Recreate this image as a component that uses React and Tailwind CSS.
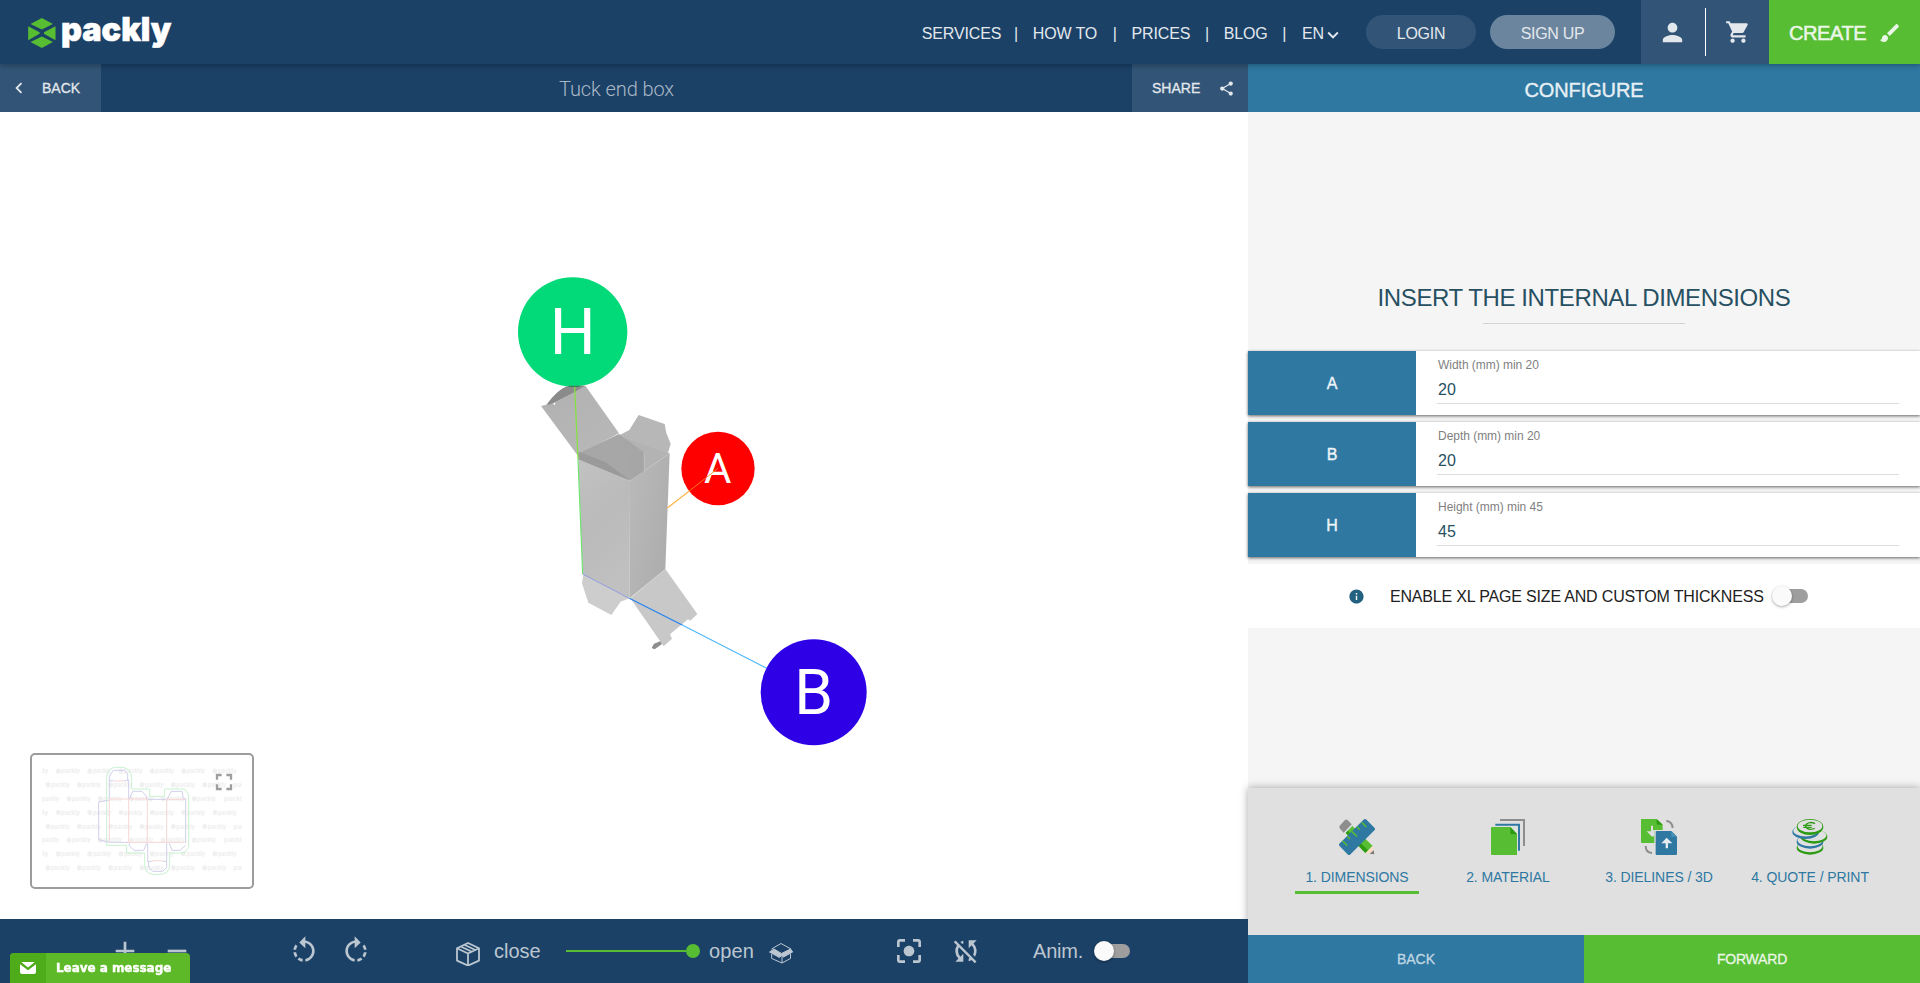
import React from "react";
import {
  MdAdd,
  MdRemove,
  MdRotateLeft,
  MdRotateRight,
  MdCenterFocusStrong,
  MdSyncDisabled,
  MdPerson,
  MdShoppingCart,
  MdBrush,
  MdShare,
  MdInfo,
  MdExpandMore,
  MdChevronLeft,
  MdFullscreen,
} from "react-icons/md";

const NAV = [
  { label: "SERVICES", className: "mr-[-2px]" },
  { label: "HOW TO", className: "mr-[1px]" },
  { label: "PRICES", className: "" },
  { label: "BLOG", className: "" },
];

function Logo() {
  return (
    <svg className="ml-[28px] h-[60px] w-[150px] overflow-visible" viewBox="28 2 150 60">
      <g fill="#57bd32">
        <path d="M41.8 18 53 24 41.8 29.6 30.5 24Z" />
        <path d="M41.8 48 53 42 41.8 36.6 30.5 42Z" />
        <path d="M28.2 26.3 39.6 32.2V33.8L28.2 40.2Z" />
        <path d="M55.5 26.3 44 32.2V33.8L55.5 40.2Z" />
      </g>
      <text
        x="61"
        y="40.7"
        fontSize="33"
        fontWeight="900"
        fontFamily="Inter, sans-serif"
        fill="#fff"
        stroke="#fff"
        strokeWidth="0.6"
        textLength="110.5"
        lengthAdjust="spacingAndGlyphs"
      >
        packly
      </text>
    </svg>
  );
}

function Header() {
  return (
    <header className="relative z-20 flex h-16 shrink-0 items-center bg-[#1b4167] text-[#e3e8ed] shadow-[0_2px_5px_rgba(0,0,0,0.26)]">
      <Logo />
      <nav className="ml-auto flex items-center gap-[14.7px] pt-[3px] text-base tracking-[-0.13px]">
        {NAV.map((item) => (
          <React.Fragment key={item.label}>
            <a className={"whitespace-nowrap " + item.className}>{item.label}</a>
            <span className="w-1 text-center">|</span>
          </React.Fragment>
        ))}
        <a className="ml-[1px] flex items-center">
          EN
          <MdExpandMore size={22} className="ml-[-2px] mt-[2px]" />
        </a>
      </nav>
      <button className="ml-[22px] h-[34px] w-[110px] rounded-full bg-[#325577] pt-[3px] text-base tracking-[-0.3px]">
        LOGIN
      </button>
      <button className="ml-[14px] h-[34px] w-[125px] rounded-full bg-[#6b859e] pt-[3px] text-base tracking-[-0.3px]">
        SIGN UP
      </button>
      <div className="ml-[26px] flex h-16 w-32 items-center bg-[#325577]">
        <div className="flex w-16 justify-center pr-px">
          <MdPerson size={29} />
        </div>
        <div className="h-12 w-px bg-white" />
        <div className="flex flex-1 justify-center">
          <MdShoppingCart size={26} />
        </div>
      </div>
      <button className="flex h-16 w-[151px] items-center bg-[#57bd32] pl-5 pt-px text-xl tracking-[-0.4px] text-[#eaf6e6] [-webkit-text-stroke:0.5px_#eaf6e6]">
        CREATE
        <MdBrush size={24} className="ml-[12px]" strokeWidth="0" />
      </button>
    </header>
  );
}

function Scene() {
  return (
    <svg
      className="ml-[500px] mt-[148px] h-[500px] w-[400px]"
      viewBox="0 0 1200 1500"
      fontFamily="Roboto, sans-serif"
      textAnchor="middle"
    >
      <defs>
        <linearGradient id="front" x1="0" y1="0" x2="0.3" y2="1">
          <stop offset="0" stopColor="#c2c2c2" />
          <stop offset="0.5" stopColor="#bababa" />
          <stop offset="1" stopColor="#c0c0c0" />
        </linearGradient>
        <linearGradient id="side" x1="0" y1="0" x2="1" y2="0.6">
          <stop offset="0" stopColor="#bababa" />
          <stop offset="1" stopColor="#adadad" />
        </linearGradient>
        <linearGradient id="lid" x1="0" y1="0" x2="0.6" y2="1">
          <stop offset="0" stopColor="#b0b0b0" />
          <stop offset="1" stopColor="#b8b8b8" />
        </linearGradient>
      </defs>
      <circle cx="218" cy="216" r="164" fill="#02d978" />
      <text x="218" y="282" fontSize="193" fill="#fff">H</text>

      <path d="M137 437C160 405 185 382 212 377H256L225 396Z" fill="#8b8b8b" />
      <path d="M123 438 158 430 165 436 166 427 224 396 256 377 357 520 240 582 237 592Z" fill="url(#lid)" />
      <path d="M143 436C160 405 185 382 205 378H254L224 396 163 428Z" fill="#8b8b8b" />
      <path d="M358 526 388 510 416 465 494 492 499 519 512 551 504 579Z" fill="#b7b7b7" />
      <path d="M358 525 509 580 433 632Z" fill="#b3b3b3" />
      <path d="M240 578 357 522 433 578V634L390 662 235 600Z" fill="#a6a6a6" />
      <path d="M255 580 357 524 380 585 395 655Z" fill="#a9a9a9" opacity=".6" />
      <path d="M235 575 317 607 390 662 235 600Z" fill="#9a9a9a" />
      <path d="M433 578V632" stroke="#c4c4c4" strokeWidth="2.5" />
      <path d="M235 598 390 662 389 1015 248 942Z" fill="url(#front)" />
      <path d="M390 662 509 580 496 927 389 1015Z" fill="url(#side)" />
      <path d="M250 943 388 1015 362 1025 334 1065 265 1028 246 970Z" fill="#cdcdcd" />
      <path d="M455 1164 462 1151 482 1143 486 1152 464 1168Z" fill="#8e8e8e" />
      <path d="M391 1015 496 927 592 1062 571 1082 564 1078 510 1123 516 1136 491 1159Z" fill="#c8c8c8" />

      <path d="M224 380 234 598" stroke="#83e53b" strokeWidth="3.5" />
      <path d="M234 598 248 942" stroke="#6be46d" strokeWidth="3.5" />
      <path d="M248 942 388 1015" stroke="#8e9bdd" strokeWidth="3" />
      <path d="M388 1015 548 1096" stroke="#2082f0" strokeWidth="3.5" />
      <path d="M548 1096 800 1225" stroke="#4db8fa" strokeWidth="3.5" />
      <path d="M206 379H238" stroke="#25834f" strokeWidth="3" />

      <circle cx="654" cy="625.500" r="110" fill="#fe0000" />
      <text x="653" y="669" fontSize="126" fill="#fff">A</text>
      <path d="M502 744 569 692" stroke="#fdb546" strokeWidth="3.5" />
      <path d="M569 692 654 625" stroke="#ff8a1c" strokeWidth="2.5" />
      <circle cx="941" cy="1297" r="159" fill="#2e00e6" />
      <text x="941" y="1361" fontSize="187" fill="#fff">B</text>
    </svg>
  );
}

const MARK_ROWS = [94, 135, 177, 218, 260, 301, 342, 384];
const MARK_STARTS = [168, 137, 200];
const MARK_COUNTS = [6, 6, 5];
const MARK_COLS = [0, 1, 2, 3, 4, 5];

function Mark({ x, y }) {
  return (
    <g>
      <path d={"M" + x + " " + (y - 5) + "l7 -4 7 4v9l-7 4-7-4z"} />
      <text x={x + 16} y={y + 6} textLength="56" lengthAdjust="spacingAndGlyphs">
        packly
      </text>
    </g>
  );
}

function DielinePreview() {
  return (
    <div className="absolute bottom-[30px] left-[30px] h-[136px] w-[224px] rounded-[5px] border-2 border-[#9c9c9c] bg-white">
      <svg className="h-[132px] w-[220px]" viewBox="96 45 660 396" fill="none">
        <g fill="#f0f0f0" fontFamily="Inter, sans-serif" fontWeight="800" fontSize="20">
          {MARK_ROWS.map((y, r) => (
            <g key={y}>
              {MARK_COLS.slice(0, MARK_COUNTS[r % 3]).map((c) => (
                <Mark key={c} x={MARK_STARTS[r % 3] + c * 94} y={y} />
              ))}
              {r % 3 === 0 && <text x="127" y={y + 6} textLength="19" lengthAdjust="spacingAndGlyphs">ly</text>}
              {r % 3 === 1 && <text x="700" y={y + 6} textLength="25" lengthAdjust="spacingAndGlyphs">pa</text>}
              {r % 3 === 2 && <text x="127" y={y + 6} textLength="50" lengthAdjust="spacingAndGlyphs">packly</text>}
              {r % 3 === 2 && <text x="672" y={y + 6} textLength="53" lengthAdjust="spacingAndGlyphs">packl</text>}
            </g>
          ))}
        </g>
        <path
          d="M320 316V110Q322 82 350 82H366Q393 84 395 112V147H449V169H494V147H554L566 165V322L552 339H509V376Q507 403 480 403H462Q436 403 434 376V339H380V316Z"
          stroke="#c9f2d0"
          strokeWidth="3"
        />
        <g stroke="#d0d0ea" strokeWidth="3">
          <path d="M328 177V108L340 91H374L383 102V120H386V177" />
          <path d="M328 180 296 186V299L328 307H386" />
          <path d="M388 177 398 154H426L440 170V177" />
          <path d="M442 178H500M502 177 514 154H546L550 176H557V308" />
          <path d="M388 308V318L403 331H431L440 310M508 310 516 331H540L557 316" />
          <path d="M443 310V364H446V382L458 394H488L500 382V310M443 364H458M488 364H500M328 122H340M372 122H386" />
        </g>
        <g stroke="#f8d6d6" strokeWidth="3">
          <path d="M328 177H442M500 178H557M328 180V305M386 177V307M442 178V308M500 178V308M386 307H557M342 123H372M458 362H488" />
        </g>
      </svg>
      <MdFullscreen size={28} className="absolute right-[14px] top-[13px] text-[#9e9e9e]" />
    </div>
  );
}

function Toggle({ className }) {
  return (
    <div className={"flex h-5 w-9 items-center " + className}>
      <div className="flex h-3.5 w-[35px] items-center rounded-full bg-[#9e9e9e]">
        <div className="-ml-px h-5 w-5 shrink-0 rounded-full bg-[#fafafa] shadow-[0_1px_3px_rgba(0,0,0,0.35)]" />
      </div>
    </div>
  );
}

function ClosedBoxIcon() {
  return (
    <svg className="h-6 w-6" viewBox="0 0 24 24" fill="none" stroke="currentColor" strokeWidth="1.8" strokeLinejoin="round">
      <path d="M12 1 23 6.300V18.600L12 23.600 1 18.600V6.300Z" />
      <path d="M1 6.300 12 11.500 23 6.300M12 11.500V23.600M4.800 4.500 15.800 9.700M8.400 2.800 19.300 8" />
    </svg>
  );
}

function OpenBoxIcon() {
  return (
    <svg className="h-[22px] w-6" viewBox="0 0 24 22" fill="none" stroke="currentColor" strokeWidth="1">
      <path d="M2.500 7 12 1.500 22 7M2.700 12V16.500L13 21 21.500 16.500V12M13 14V21" />
      <path d="M.5 10 5 7 12.500 11.500 21.500 7 23.700 10 14.500 15 12.500 13.500 10.500 15.500Z" fill="currentColor" />
    </svg>
  );
}

function Toolbar() {
  return (
    <div className="relative z-10 flex h-16 shrink-0 items-center bg-[#1b4167] text-xl text-[#bbc6d1]">
      <MdAdd size={32} className="ml-[109px]" />
      <MdRemove size={32} className="ml-[20px]" />
      <MdRotateLeft size={32} className="ml-[95px]" />
      <MdRotateRight size={32} className="ml-[20px]" />
      <div className="ml-[84px] mt-[5px]">
        <ClosedBoxIcon />
      </div>
      <span className="ml-[14px] w-[48px]">close</span>
      <div className="ml-[24px] flex w-[134px] items-center">
        <div className="h-0.5 flex-1 bg-[#57bd32]" />
        <div className="h-3.5 w-3.5 rounded-full bg-[#57bd32]" />
      </div>
      <span className="ml-[9px] w-[46px] tracking-[0.1px]">open</span>
      <div className="ml-[14px] mt-[4px]">
        <OpenBoxIcon />
      </div>
      <MdCenterFocusStrong size={32} className="ml-[100px]" />
      <MdSyncDisabled size={32} className="ml-[25px]" />
      <span className="ml-[51px] w-[52px] tracking-[-0.2px]">Anim.</span>
      <Toggle className="ml-[10px]" />
    </div>
  );
}

function Workspace() {
  return (
    <main className="flex w-[1248px] flex-col bg-white">
      <div className="relative z-10 flex h-12 shrink-0 items-center justify-between bg-[#1b4167] text-sm text-[#e3e8ed]">
        <button className="flex h-12 w-[101px] items-center bg-[#325577] pl-[8px] [-webkit-text-stroke:0.3px_#e3e8ed]">
          <MdChevronLeft size={22} strokeWidth="0" />
          <span className="ml-[12px]">BACK</span>
        </button>
        <h1 className="pt-[2px] text-[20px] font-light tracking-[-0.1px] text-[#aab8c6] [font-family:Roboto,sans-serif]">Tuck end box</h1>
        <button className="flex h-12 w-[116px] items-center bg-[#325577] pl-5 [-webkit-text-stroke:0.3px_#e3e8ed]">
          SHARE
          <MdShare size={17} className="ml-[18px]" strokeWidth="0" />
        </button>
      </div>
      <div className="relative flex-1">
        <Scene />
        <DielinePreview />
      </div>
      <Toolbar />
    </main>
  );
}

const FIELDS = [
  { key: "A", label: "Width (mm) min 20", value: "20" },
  { key: "B", label: "Depth (mm) min 20", value: "20" },
  { key: "H", label: "Height (mm) min 45", value: "45" },
];

function Field({ field }) {
  return (
    <div className="flex h-16 bg-white shadow-[0_1px_3px_rgba(0,0,0,0.6)]">
      <div className="flex w-[168px] items-center justify-center bg-[#2e78a2] pt-[2px] text-base text-[#edf3f7] [-webkit-text-stroke:0.4px_#edf3f7]">
        {field.key}
      </div>
      <div className="ml-[21px] mr-[21px] flex-1 pt-[6px]">
        <div className="h-[47px] border-b border-[#dedede] pl-px">
          <div className="text-xs leading-[16px] tracking-[-0.03px] text-[#7f7f7f]">{field.label}</div>
          <div className="pt-[5px] text-base leading-6 text-[#275062]">{field.value}</div>
        </div>
      </div>
    </div>
  );
}

function DimensionsIcon() {
  return (
    <svg className="h-9 w-9" viewBox="42 27 108 108">
      <path d="M44 47 60 30Q64 27 68 31L80 43 56 68 45 56Q42 51 44 47Z" fill="#8d8d8d" />
      <path d="M62 69 82 48 143 108 122 130Z" fill="#57bd32" />
      <path d="M62 69 68 62 131 122 122 130Z" fill="#2c9a12" />
      <path d="M143 107 148 133 121 129Z" fill="#f6dcc3" />
      <path d="M146 121 148 133 134 131Z" fill="#7b7b7b" />
      <path d="M43 101 117 28Q120 26 123 28L149 54Q151 57 149 60L75 134Q72 136 69 134L43 107Q41 104 43 101Z" fill="#2e78a2" />
      <path d="M110 37 124 51M96 50 104 59M81 65 96 79M67 79 75 87M53 93 67 107" stroke="#57bd32" strokeWidth="4.500" />
    </svg>
  );
}

function MaterialIcon() {
  return (
    <svg className="h-9 w-9" viewBox="495 27 108 108" fill="none">
      <path d="M525 30H597V108" stroke="#8d8d8d" strokeWidth="6" />
      <path d="M511 44H582V122" stroke="#2e78a2" strokeWidth="6" />
      <path d="M501 51H556L576 71V135H501Q498 135 498 132V54Q498 51 501 51Z" fill="#57bd32" />
      <path d="M556 51 576 73H559Q556 73 556 70Z" fill="#2c9a12" />
    </svg>
  );
}

function DielinesIcon() {
  return (
    <svg className="h-9 w-9" viewBox="951 27 108 108" fill="none">
      <path d="M1027 32Q1045 35 1046 54M984 129Q965 128 965 108" stroke="#8d8d8d" strokeWidth="6" />
      <path d="M951 27H998L1016 44V60H991V99H954Q951 99 951 96Z" fill="#57bd32" />
      <path d="M998 27 1016 44H1001Q998 44 998 41Z" fill="#2c9a12" />
      <path d="M981 47H987V60H991V78L984 80 968 64H981Z" fill="#e0e0e0" />
      <path d="M998 63H1042L1059 80V132Q1059 135 1056 135H998Q995 135 995 132V66Q995 63 998 63Z" fill="#2e78a2" />
      <path d="M1042 63 1059 80H1042Z" fill="#4793ba" />
      <path d="M1028 83 1045 100H1032V115H1025V100H1012Z" fill="#e6edf1" />
    </svg>
  );
}

function Coin({ cx, cy, color }) {
  return (
    <g>
      <ellipse cx={cx} cy={cy + 4} rx="40" ry="21" fill={color} />
      <ellipse cx={cx} cy={cy} rx="37" ry="17.500" fill="#e0e0e0" />
    </g>
  );
}

function QuoteIcon() {
  return (
    <svg className="h-9 w-9" viewBox="1403 27 108 108">
      <Coin cx={1457} cy={109} color="#2c9a12" />
      <Coin cx={1457} cy={91} color="#2e78a2" />
      <Coin cx={1469} cy={76} color="#2c9a12" />
      <Coin cx={1444} cy={62} color="#2e78a2" />
      <ellipse cx="1457" cy="51" rx="40" ry="24" fill="#2c9a12" />
      <ellipse cx="1457" cy="48" rx="37" ry="19" fill="#e0e0e0" />
      <path d="M1472 41Q1462 35 1452 39 1443 43 1444 49 1447 58 1458 58 1467 58 1471 55M1436 46H1462M1437 52H1462" fill="none" stroke="#2c9a12" strokeWidth="4" />
    </svg>
  );
}

const STEPS = [
  { label: "1. DIMENSIONS", Icon: DimensionsIcon, active: true },
  { label: "2. MATERIAL", Icon: MaterialIcon },
  { label: "3. DIELINES / 3D", Icon: DielinesIcon },
  { label: "4. QUOTE / PRINT", Icon: QuoteIcon },
];

function ConfigurePanel() {
  return (
    <aside className="flex w-[672px] flex-col bg-[#f5f5f5]">
      <div className="flex h-12 shrink-0 items-center justify-center bg-[#2e78a2] pt-[3px] text-xl tracking-[-0.1px] text-[#e6eff4] [-webkit-text-stroke:0.4px_#e6eff4]">
        CONFIGURE
      </div>
      <div className="flex flex-1 flex-col">
        <h2 className="mt-[170px] text-center text-2xl leading-8 tracking-[-0.39px] text-[#275062]">
          INSERT THE INTERNAL DIMENSIONS
        </h2>
        <div className="mx-auto mt-[9px] h-px w-[202px] bg-[#d3d3d3]" />
        <div className="mt-[27px] flex flex-col gap-[7px]">
          {FIELDS.map((f) => (
            <Field key={f.key} field={f} />
          ))}
        </div>
        <div className="mt-[7px] flex h-16 items-center bg-white">
          <MdInfo size={17} className="ml-[100px] text-[#24607f]" />
          <span className="ml-[25px] w-[376px] whitespace-nowrap pt-px text-base tracking-[-0.18px] text-[#212121]">
            ENABLE XL PAGE SIZE AND CUSTOM THICKNESS
          </span>
          <Toggle className="ml-[7px]" />
        </div>
      </div>
      <div className="flex h-[147px] shrink-0 justify-center bg-[#e0e0e0] pr-px pt-[31px] shadow-[0_0_8px_rgba(0,0,0,0.35)]">
        {STEPS.map(({ label, Icon, active }) => (
          <div key={label} className="flex w-[151px] flex-col items-center">
            <Icon />
            <div className={"mt-[10px] flex h-[29px] items-center justify-center border-b-3 text-sm tracking-[-0.08px] text-[#2e78a2] " + (active ? "w-[124px] border-[#57bd32]" : "border-transparent")}>
              <span className="mt-[-2px] whitespace-nowrap">{label}</span>
            </div>
          </div>
        ))}
      </div>
      <div className="relative flex h-12 shrink-0 text-sm">
        <button className="w-1/2 bg-[#2e78a2] text-[#c0d7e3] [-webkit-text-stroke:0.3px_#c0d7e3]">BACK</button>
        <button className="w-1/2 bg-[#57bd32] tracking-[-0.2px] text-[#eaf6e6] [-webkit-text-stroke:0.3px_#eaf6e6]">FORWARD</button>
      </div>
    </aside>
  );
}

function ChatTab() {
  return (
    <div className="fixed bottom-0 left-[10px] z-30 flex h-[30px] w-[180px] overflow-hidden rounded-t-[4px] bg-[#5db928] text-white">
      <div className="flex w-9 items-center justify-center bg-[#4eab19]">
        <svg className="h-3 w-4" viewBox="0 0 16 12">
          <path d="M0 2.200V10Q0 12 2 12H14Q16 12 16 10V2.200L8 8.200Z" fill="#fff" />
          <path d="M1.200 0H14.800L8 5.500Z" fill="#fff" />
        </svg>
      </div>
      <span className="whitespace-nowrap pl-[10px] text-xs font-bold leading-[30px] tracking-[-0.05px] [-webkit-text-stroke:0.4px_#fff] [font-family:'DejaVu_Sans',sans-serif]">
        Leave a message
      </span>
    </div>
  );
}

export default function App() {
  return (
    <div className="flex h-[983px] w-[1920px] flex-col overflow-hidden [font-family:'Liberation_Sans',Arial,sans-serif]">
      <Header />
      <div className="flex min-h-0 flex-1">
        <Workspace />
        <ConfigurePanel />
      </div>
      <ChatTab />
    </div>
  );
}
